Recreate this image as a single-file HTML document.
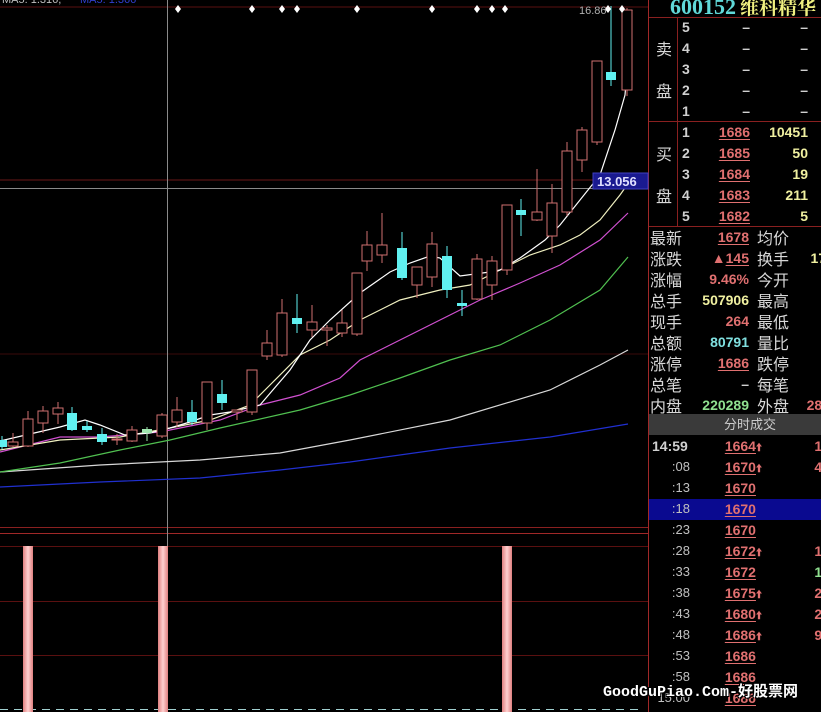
<!DOCTYPE html>
<html><head><meta charset="utf-8">
<style>
html,body{margin:0;padding:0;background:#000;width:821px;height:712px;overflow:hidden;position:relative;font-family:"Liberation Sans","Noto Sans CJK SC",sans-serif;}
#chart{position:absolute;left:0;top:0;}
.p{position:absolute;white-space:nowrap;font-size:14px;line-height:16px;}
.cn{font-family:"Noto Sans CJK SC","WenQuanYi Zen Hei",sans-serif;font-size:16px;color:#d8d8d8;}
.num{font-family:"Liberation Sans",sans-serif;font-weight:bold;font-size:14px;text-align:right;}
.tm{font-family:"Liberation Sans",sans-serif;font-size:13px;text-align:right;color:#c0c0c0;}
.red{color:#e07070}.yel{color:#f0f0a0}.cy{color:#80e0e0}.gr{color:#90e090}.wh{color:#d0d0d0}
.u{text-decoration:underline;text-decoration-thickness:1px;text-underline-offset:2px;}
</style></head><body>
<svg id="chart" width="821" height="712" xmlns="http://www.w3.org/2000/svg"></svg>

<div class="p" style="left:670px;top:-5px;font-family:'Liberation Serif',serif;font-weight:bold;font-size:22px;line-height:24px;color:#60d8d8;">600152</div>
<div class="p" style="left:740px;top:-5px;font-family:'Noto Serif CJK SC',serif;font-weight:bold;font-size:19px;line-height:24px;color:#f0f080;">维科精华</div>

<div id="rp"></div>

<div class="p" style="left:603px;top:684px;font-family:'Liberation Mono','Noto Sans CJK SC',monospace;font-weight:bold;font-size:15px;line-height:18px;color:#fff;text-shadow:1px 1px 0 #000,-1px -1px 0 #000,1px -1px 0 #000,-1px 1px 0 #000;">GoodGuPiao.Com-好股票网</div>

<script>
const svg=document.getElementById('chart');
let h='';
const R='#5a1010';
h+=`<line x1="0" y1="7" x2="648" y2="7" stroke="${R}" />`;
h+=`<line x1="0" y1="180" x2="648" y2="180" stroke="#6a1818" />`;
h+=`<line x1="0" y1="354" x2="648" y2="354" stroke="#3a0a0a" />`;
h+=`<line x1="0" y1="527.5" x2="648" y2="527.5" stroke="#8a2020" />`;
h+=`<line x1="0" y1="533.5" x2="648" y2="533.5" stroke="#a02828" />`;
h+=`<line x1="0" y1="546.5" x2="648" y2="546.5" stroke="${R}" />`;
h+=`<line x1="0" y1="601.5" x2="648" y2="601.5" stroke="${R}" />`;
h+=`<line x1="0" y1="655.5" x2="648" y2="655.5" stroke="${R}" />`;
h+=`<line x1="0" y1="709.5" x2="640" y2="709.5" stroke="#a0d0d0" stroke-dasharray="8,6" />`;
h+=`<line x1="648.5" y1="0" x2="648.5" y2="712" stroke="#a02828" />`;
h+=`<line x1="0" y1="188.5" x2="593" y2="188.5" stroke="#8a8a8a" />`;
h+=`<line x1="167.5" y1="0" x2="167.5" y2="546" stroke="#8a8a8a" />`;
function pl(pts,c){return `<polyline fill="none" stroke="${c}" stroke-width="1.2" points="${pts}"/>`;}
h+=pl("0,487 100,482 200,478 280,470 350,462 450,448 550,437 628,424","#2030d0");
h+=pl("0,472 100,465 200,460 280,453 350,440 450,420 550,390 600,365 628,350","#d8d8d8");
h+=pl("0,472 60,463 120,450 170,440 220,428 300,410 350,395 400,378 450,360 500,345 550,320 600,290 628,257","#50c050");
h+=pl("0,452 60,437 100,437 160,432 220,420 260,405 300,395 340,378 360,360 400,340 440,320 480,300 520,283 560,265 600,240 628,213","#d050d0");
h+=pl("0,450 60,440 120,437 170,428 210,420 250,405 270,385 300,355 330,340 360,320 400,300 440,290 470,285 500,270 530,255 560,245 580,235 600,220 620,195 632,178","#f0f0c0");
h+=pl("0,441 30,434 60,427 85,420 100,425 125,435 150,433 170,428 190,422 210,415 230,412 260,405 290,370 310,340 330,320 360,293 390,272 410,263 430,256 440,258 460,276 490,272 500,270 520,258 545,240 560,225 580,200 600,175 615,130 625,95 632,10","#ffffff");
const C=[[2,440,447,436,449,'c'],[13,442,446,433,447,'r'],[28,419,446,411,447,'r'],[43,411,423,406,433,'r'],[58,408,414,402,424,'r'],[72,413,430,407,431,'c'],[87,426,430,421,432,'c'],[102,434,442,428,445,'c'],[117,439,440,434,445,'r'],[132,430,441,426,442,'r'],[147,429,433,427,441,'g'],[162,415,436,413,438,'r'],[177,410,422,397,427,'r'],[192,412,422,400,425,'c'],[207,382,423,382,430,'r'],[222,394,403,380,410,'c'],[237,410,412,410,420,'r'],[252,370,412,370,415,'r'],[267,343,356,330,360,'r'],[282,313,355,299,357,'r'],[297,318,324,294,333,'c'],[312,322,330,305,337,'r'],[327,328,330,325,346,'r'],[342,323,333,310,337,'r'],[357,273,334,273,336,'r'],[367,245,261,231,271,'r'],[382,245,255,213,263,'r'],[402,248,278,232,280,'c'],[417,267,285,267,298,'r'],[432,244,277,232,287,'r'],[447,256,290,246,298,'c'],[462,303,306,290,316,'c'],[477,259,299,254,300,'r'],[492,261,285,256,300,'r'],[507,205,270,205,275,'r'],[521,210,215,199,236,'c'],[537,212,220,169,221,'r'],[552,203,236,184,253,'r'],[567,151,212,142,216,'r'],[582,130,160,127,172,'r'],[597,61,142,61,145,'r'],[611,72,80,6,86,'c'],[627,10,90,8,96,'r']];
for(const [x,t,b,hi,lo,ty] of C){
  if(ty=='r'){
    h+=`<line x1="${x}" y1="${hi}" x2="${x}" y2="${t}" stroke="#d07070"/><line x1="${x}" y1="${b}" x2="${x}" y2="${lo}" stroke="#d07070"/>`;
    h+=`<rect x="${x-5}" y="${t}" width="10" height="${Math.max(b-t,1)}" fill="#000" stroke="#d07070"/>`;
  } else {
    const col=ty=='g'?'#a0e8b0':'#60f0f0';
    h+=`<line x1="${x}" y1="${hi}" x2="${x}" y2="${lo}" stroke="${col}"/>`;
    h+=`<rect x="${x-5}" y="${t}" width="10" height="${Math.max(b-t,2)}" fill="${col}"/>`;
  }
}
for(const x of [178,252,282,297,357,432,477,492,505,608,622]){
  h+=`<polygon points="${x},5 ${x+3},9 ${x},13 ${x-3},9" fill="#fff"/>`;
}
h+=`<text x="579" y="14" fill="#b0b0b0" font-size="11" font-family="Liberation Sans">16.86</text>`;
h+=`<text x="2" y="3" fill="#c0c0c0" font-size="11" font-family="Liberation Sans">MA5: 1.316,</text>`;
h+=`<text x="80" y="3" fill="#3040d0" font-size="11" font-family="Liberation Sans">MA5:  1.366</text>`;
h+=`<rect x="593" y="173" width="55" height="16" fill="#1a1a90" stroke="#4040c0"/>`;
h+=`<text x="597" y="186" fill="#e0e0ff" font-size="13" font-weight="bold" font-family="Liberation Sans">13.056</text>`;
for(const x of [23,158,502]){
  h+=`<defs><linearGradient id="g${x}" x1="0" x2="1"><stop offset="0" stop-color="#e08080"/><stop offset="0.5" stop-color="#ffd0d0"/><stop offset="1" stop-color="#e08080"/></linearGradient></defs>`;
  h+=`<rect x="${x}" y="546" width="10" height="166" fill="url(#g${x})"/>`;
}
const B='#8a2020';
h+=`<line x1="649" y1="17.5" x2="821" y2="17.5" stroke="${B}"/>`;
h+=`<line x1="649" y1="121.5" x2="821" y2="121.5" stroke="${B}"/>`;
h+=`<line x1="649" y1="226.5" x2="821" y2="226.5" stroke="${B}"/>`;
h+=`<line x1="677.5" y1="17" x2="677.5" y2="226" stroke="${B}"/>`;
h+=`<rect x="649" y="414" width="172" height="21" fill="#3a3a3a"/>`;
h+=`<rect x="649" y="499" width="172" height="21" fill="#0a0a90"/>`;
svg.innerHTML=h;

let r='';
function t(x,y,s,cls,w){ if(w) r+=`<div class="p ${cls}" style="left:${x-w}px;top:${y-8}px;width:${w}px;">${s}</div>`; else r+=`<div class="p ${cls}" style="left:${x}px;top:${y-8}px;">${s}</div>`;}
t(656,48,'卖','cn');t(656,90,'盘','cn');
t(656,153,'买','cn');t(656,195,'盘','cn');
[5,4,3,2,1].forEach((n,i)=>{const y=27+i*21;t(682,y,n,'num wh');t(750,y,'–','num wh',20);t(808,y,'–','num wh',20);});
const buy=[['1686','10451'],['1685','50'],['1684','19'],['1683','211'],['1682','5']];
buy.forEach((b,i)=>{const y=132+i*21;t(682,y,i+1,'num wh');t(750,y,`<span class="u">${b[0]}</span>`,'num red',60);t(808,y,b[1],'num yel',60);});
const info=[['最新','<span class="u">1678</span>','red','均价'],['涨跌','▲<span class="u">145</span>','red','换手'],['涨幅','9.46%','red','今开'],['总手','507906','yel','最高'],['现手','264','red','最低'],['总额','80791','cy','量比'],['涨停','<span class="u">1686</span>','red','跌停'],['总笔','–','wh','每笔'],['内盘','220289','gr','外盘']];
info.forEach((a,i)=>{const y=237+i*21;t(650,y,a[0],'cn');t(749,y,a[1],'num '+a[2],90);t(757,y,a[3],'cn');});
t(830,258,'17.','num yel',30);t(830,405,'282','num red',40);
r+=`<div class="p cn" style="left:724px;top:416px;font-size:13px;color:#ccc">分时成交</div>`;
const tk=[['14:59','1664',1,'16','red'],[':08','1670',1,'41','red'],[':13','1670',0,'2','gr'],[':18','1670',0,'9','gr'],[':23','1670',0,'9','gr'],[':28','1672',1,'13','red'],[':33','1672',0,'19','gr'],[':38','1675',1,'28','red'],[':43','1680',1,'20','red'],[':48','1686',1,'94','red'],[':53','1686',0,'3','red'],[':58','1686',0,'3','red'],['15:00','1686',0,'2','red']];
tk.forEach((a,i)=>{const y=446+i*21;
  if(i==0) t(652,y,a[0],'num wh'); else t(690,y,a[0],'tm',50);
  t(762,y,`<span class="u">${a[1]}</span>${a[2]?'<span style="font-size:11px">🠩</span>':'<span style="visibility:hidden;font-size:11px">🠩</span>'}`,'num red',70);
  t(830,y,a[3],'num '+a[4],30);
});
document.getElementById('rp').innerHTML=r;
</script>
</body></html>
